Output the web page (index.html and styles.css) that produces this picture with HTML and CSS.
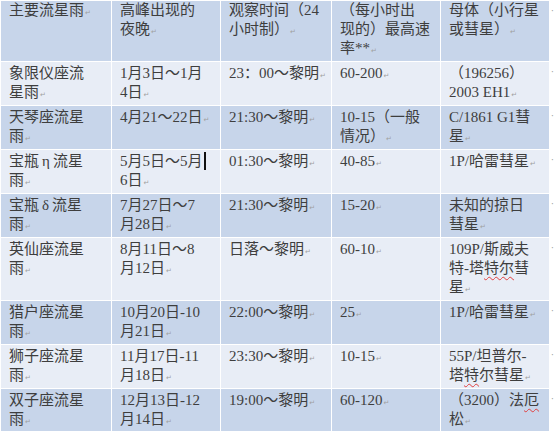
FILE: index.html
```html
<!DOCTYPE html>
<html lang="zh">
<head>
<meta charset="utf-8">
<title>主要流星雨</title>
<link rel="stylesheet" href="styles.css">
</head>
<body>
<table class="showers">
  <colgroup>
    <col class="c1"><col class="c2"><col class="c3"><col class="c4"><col class="c5"><col class="c6">
  </colgroup>
  <tr class="head">
    <td>主要流星雨<span class="pm">↵</span></td>
    <td>高峰出现的<br>夜晚<span class="pm">↵</span></td>
    <td>观察时间（24<br>小时制）<span class="pm">↵</span></td>
    <td>（每小时出<br>现的）最高速<br>率**<span class="pm">↵</span></td>
    <td>母体（小行星<br>或彗星）<span class="pm">↵</span></td>
    <td class="eor">·</td>
  </tr>
  <tr class="light">
    <td>象限仪座流<br>星雨<span class="pm">↵</span></td>
    <td>1月3日～1月<br>4日<span class="pm">↵</span></td>
    <td>23：00～黎明<span class="pm">↵</span></td>
    <td>60-200<span class="pm">↵</span></td>
    <td>（196256）<br>2003 EH1<span class="pm">↵</span></td>
    <td class="eor">·</td>
  </tr>
  <tr class="dark">
    <td>天琴座流星<br>雨<span class="pm">↵</span></td>
    <td>4月21～22日<span class="pm">↵</span></td>
    <td>21:30～黎明<span class="pm">↵</span></td>
    <td>10-15（一般<br>情况）<span class="pm">↵</span></td>
    <td>C/1861 G1彗<br>星<span class="pm">↵</span></td>
    <td class="eor">·</td>
  </tr>
  <tr class="light">
    <td>宝瓶<span class="greek">η</span>流星<br>雨<span class="pm">↵</span></td>
    <td>5月5日～5月<span class="caret"></span><br>6日<span class="pm">↵</span></td>
    <td>01:30～黎明<span class="pm">↵</span></td>
    <td>40-85<span class="pm">↵</span></td>
    <td>1P/哈雷彗星<span class="pm">↵</span></td>
    <td class="eor">·</td>
  </tr>
  <tr class="dark">
    <td>宝瓶<span class="greek">δ</span>流星<br>雨<span class="pm">↵</span></td>
    <td>7月27日～7<br>月28日<span class="pm">↵</span></td>
    <td>21:30～黎明<span class="pm">↵</span></td>
    <td>15-20<span class="pm">↵</span></td>
    <td>未知的掠日<br>彗星<span class="pm">↵</span></td>
    <td class="eor">·</td>
  </tr>
  <tr class="light">
    <td>英仙座流星<br>雨<span class="pm">↵</span></td>
    <td>8月11日～8<br>月12日<span class="pm">↵</span></td>
    <td>日落～黎明<span class="pm">↵</span></td>
    <td>60-10<span class="pm">↵</span></td>
    <td>109P/斯威夫<br>特-塔<span class="sp">特尔</span>彗<br>星<span class="pm">↵</span></td>
    <td class="eor">·</td>
  </tr>
  <tr class="dark">
    <td>猎户座流星<br>雨<span class="pm">↵</span></td>
    <td>10月20日-10<br>月21日<span class="pm">↵</span></td>
    <td>22:00～黎明<span class="pm">↵</span></td>
    <td>25<span class="pm">↵</span></td>
    <td>1P/哈雷彗星<span class="pm">↵</span></td>
    <td class="eor">·</td>
  </tr>
  <tr class="light">
    <td>狮子座流星<br>雨<span class="pm">↵</span></td>
    <td>11月17日-11<br>月18日<span class="pm">↵</span></td>
    <td>23:30～黎明<span class="pm">↵</span></td>
    <td>10-15<span class="pm">↵</span></td>
    <td>55P/坦普尔-<br>塔<span class="sp">特</span>尔彗星<span class="pm">↵</span></td>
    <td class="eor">·</td>
  </tr>
  <tr class="dark">
    <td>双子座流星<br>雨<span class="pm">↵</span></td>
    <td>12月13日-12<br>月14日<span class="pm">↵</span></td>
    <td>19:00～黎明<span class="pm">↵</span></td>
    <td>60-120<span class="pm">↵</span></td>
    <td>（3200）法<span class="sp">厄</span><br>松<span class="pm">↵</span></td>
    <td class="eor">·</td>
  </tr>
</table>
</body>
</html>
```
FILE: styles.css
```css
html, body {
  margin: 0;
  padding: 0;
  background: #ffffff;
}

.showers {
  border-collapse: collapse;
  table-layout: fixed;
  width: 554px;
  font-family: "Liberation Serif", "Noto Sans CJK SC", serif;
  font-size: 15px;
  line-height: 19px;
  color: #3e3e3e;
}

.c1 { width: 111px; }
.c2 { width: 109px; }
.c3 { width: 111px; }
.c4 { width: 109px; }
.c5 { width: 109px; }
.c6 { width: 5px; }

.showers td {
  border: 1px solid #ffffff;
  padding: 2px 2px 0 8px;
  vertical-align: top;
  white-space: nowrap;
  overflow: hidden;
}

.showers .head td {
  padding-top: 0;
}

.head td,
.dark td {
  background: #c7d5ea;
}

.light td {
  background: #e8edf6;
}

.showers td.eor {
  background: #ffffff;
  padding: 0;
  color: #9a9a9a;
  font-size: 10px;
  text-align: right;
}

.pm {
  font-family: "DejaVu Sans", sans-serif;
  font-size: 7px;
  color: #a0a0a0;
  margin-left: 1px;
}

.greek {
  margin: 0 3px;
}

.caret {
  display: inline-block;
  width: 2px;
  height: 18px;
  background: #111111;
  vertical-align: -4px;
  margin-left: 1px;
}

.sp {
  text-decoration: underline wavy #e04040 1px;
  text-underline-offset: 3px;
}
```
